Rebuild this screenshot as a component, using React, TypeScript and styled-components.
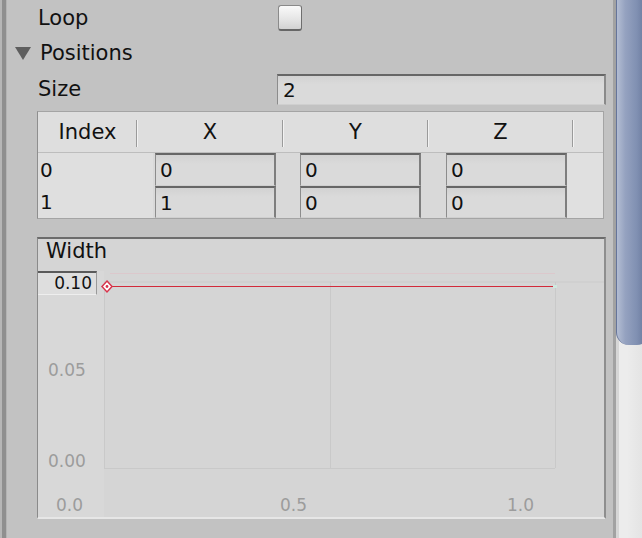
import React from 'react';
import styled, { createGlobalStyle } from 'styled-components';

const GlobalStyle = createGlobalStyle`
  html, body { margin: 0; padding: 0; background: #c2c2c2; overflow: hidden; }
  body { font-family: "DejaVu Sans", "Liberation Sans", sans-serif; color: #111; }
`;

const Page = styled.div`
  display: flex;
  width: 642px;
  height: 538px;
  overflow: hidden;
  background: #c2c2c2;
`;

const LeftEdge = styled.div`
  width: 8px;
  flex: none;
  background: linear-gradient(to right, #b6b6b6 0 2px, #8f8f8f 2px 6px, #b3b3b3 6px 7px, #c2c2c2 7px);
`;

const Main = styled.div`
  flex: 1;
  display: flex;
  flex-direction: column;
  padding: 0 7px 0 29px;
  min-width: 0;
`;

const Scrollbar = styled.div`
  width: 29px;
  flex: none;
  position: relative;
  overflow: hidden;
  background: linear-gradient(to right, #a2a2a2 0 3px, #d6d6d6 3px 6px, #ececec 6px 14px, #e4e4e4);
`;

const Thumb = styled.div`
  position: absolute;
  left: 3px;
  right: -8px;
  top: -20px;
  height: 365px;
  border-radius: 0 0 13px 13px;
  border-left: 1px solid #66759a;
  background: linear-gradient(to right, #b3bdd3, #95a2c0 25%, #8090b2 60%, #5f6e92);
`;

const PropRow = styled.div<{ $h: number }>`
  display: grid;
  grid-template-columns: 240px 1fr;
  align-items: center;
  height: ${p => p.$h}px;
`;

const Label = styled.div`
  font-size: 21px;
  line-height: 24px;
  padding-left: 1px;
  white-space: nowrap;
`;

const SizeLabel = styled(Label)`
  margin-top: 7px;
`;

const Checkbox = styled.div`
  width: 22px;
  height: 23px;
  margin-left: 1px;
  border-radius: 3px;
  border: 1px solid #8a8a8a;
  border-right-color: #6e6e6e;
  border-bottom: 2px solid #666;
  background: linear-gradient(to bottom, #fafafa, #e4e4e4 60%, #d2d2d2);
`;

const FoldoutRow = styled.div`
  display: flex;
  align-items: center;
  height: 35px;
  gap: 8px;
`;

const Triangle = styled.div`
  margin-left: -22px;
  width: 0;
  height: 0;
  border-left: 8px solid transparent;
  border-right: 8px solid transparent;
  border-top: 13px solid #5e5e5e;
  margin-top: 2px;
`;

const Field = styled.div<{ $pad?: number }>`
  box-sizing: border-box;
  height: 100%;
  font-size: 20px;
  line-height: 24px;
  display: flex;
  align-items: center;
  padding-left: ${p => p.$pad ?? 4}px;
  background: linear-gradient(to bottom, #d2d2d2, #dadada 30%, #dadada);
  border-top: 2px solid #666;
  border-left: 1px solid #8c8c8c;
  border-right: 2px solid #7e7e7e;
  border-bottom: 1px solid #cfcfcf;
`;

const SizeField = styled(Field)`
  height: 31px;
  margin-top: 4px;
  border-right: 2px solid #8a8a8a;
`;

const Table = styled.div`
  margin-top: 3px;
  width: 567px;
  box-sizing: border-box;
  border: 1px solid #a4a4a4;
  border-left-color: #8e8e8e;
  background: #dcdcdc;
`;

const HeaderRow = styled.div`
  display: grid;
  grid-template-columns: 99px 146px 145px 145px 1fr;
  height: 40px;
  background: #dedede;
  border-bottom: 1px solid #bdbdbd;
`;

const HeaderCell = styled.div<{ $divider?: boolean }>`
  position: relative;
  text-align: center;
  font-size: 21px;
  line-height: 24px;
  padding-top: 8px;
  &::after {
    content: '';
    display: ${p => (p.$divider ? 'block' : 'none')};
    position: absolute;
    right: 0;
    top: 8px;
    height: 27px;
    width: 1px;
    background: #9a9a9a;
    box-shadow: 1px 0 0 #f2f2f2;
  }
`;

const BodyRow = styled.div<{ $h: number }>`
  display: grid;
  grid-template-columns: 115px 145px 146px 123px 1fr;
  height: ${p => p.$h}px;
`;

const IndexCell = styled.div`
  font-size: 20px;
  line-height: 24px;
  padding-left: 2px;
  display: flex;
  align-items: center;
  background: #dfdfdf;
`;

const ValueCell = styled.div`
  padding-left: 2px;
  background: #d9d9d9;
  & > div { width: 121px; }
`;

const FillerCell = styled.div`
  background: #e0e0e0;
`;

const CurvePanel = styled.div`
  margin-top: 18px;
  width: 569px;
  height: 282px;
  box-sizing: border-box;
  border-top: 2px solid #6c6c6c;
  border-left: 1px solid #8a8a8a;
  border-right: 2px solid #8e8e8e;
  border-bottom: 2px solid #e6e6e6;
  background: #d5d5d5;
  display: flex;
  flex-direction: column;
`;

const CurveTitle = styled.div`
  font-size: 21px;
  line-height: 24px;
  padding-left: 8px;
  height: 24px;
`;

const Graph = styled.div`
  position: relative;
  flex: 1;
`;

const GraphSvg = styled.svg`
  position: absolute;
  left: 0;
  top: -24px;
  width: 566px;
  height: 278px;
  overflow: visible;
`;

const ValueBox = styled.div`
  position: absolute;
  left: 0;
  top: 8px;
  width: 59px;
  height: 24px;
  box-sizing: border-box;
  border-top: 2px solid #5a5a5a;
  border-right: 1px solid #9a9a9a;
  border-bottom: 1px solid #eeeeee;
  background: #dedede;
  font-size: 17px;
  line-height: 20px;
  text-align: right;
  padding-right: 4px;
`;

const axisText = { fontFamily: '"DejaVu Sans", sans-serif', fontSize: 17, fill: '#9c9c9c' } as const;

const rows = [
  { i: '0', x: '0', y: '0', z: '0', h: 33 },
  { i: '1', x: '1', y: '0', z: '0', h: 32 },
];

export default function App() {
  return (
    <>
      <GlobalStyle />
      <Page>
        <LeftEdge />
        <Main>
          <PropRow $h={35}>
            <Label>Loop</Label>
            <Checkbox />
          </PropRow>
          <FoldoutRow>
            <Triangle />
            <Label>Positions</Label>
          </FoldoutRow>
          <PropRow $h={38} style={{ alignItems: 'start' }}>
            <SizeLabel>Size</SizeLabel>
            <SizeField $pad={5}>2</SizeField>
          </PropRow>
          <Table>
            <HeaderRow>
              <HeaderCell $divider>Index</HeaderCell>
              <HeaderCell $divider>X</HeaderCell>
              <HeaderCell $divider>Y</HeaderCell>
              <HeaderCell $divider>Z</HeaderCell>
              <HeaderCell />
            </HeaderRow>
            {rows.map(r => (
              <BodyRow key={r.i} $h={r.h}>
                <IndexCell>{r.i}</IndexCell>
                <ValueCell><Field>{r.x}</Field></ValueCell>
                <ValueCell><Field>{r.y}</Field></ValueCell>
                <ValueCell><Field>{r.z}</Field></ValueCell>
                <FillerCell />
              </BodyRow>
            ))}
          </Table>
          <CurvePanel>
            <CurveTitle>Width</CurveTitle>
            <Graph>
              <GraphSvg viewBox="0 0 566 278">
                <rect x="0" y="32" width="66" height="246" fill="#d8d8d8" />
                <line x1="66" y1="43" x2="566" y2="43" stroke="#cbcbcb" strokeWidth="1" />
                <line x1="66.5" y1="43" x2="66.5" y2="229" stroke="#c9c9c9" strokeWidth="1" />
                <line x1="66" y1="229.5" x2="517" y2="229.5" stroke="#c9c9c9" strokeWidth="1" />
                <line x1="292.5" y1="43" x2="292.5" y2="229" stroke="#c9c9c9" strokeWidth="1" />
                <line x1="517.5" y1="43" x2="517.5" y2="229" stroke="#c9c9c9" strokeWidth="1" />
                <line x1="72" y1="34.5" x2="517" y2="34.5" stroke="#dcc8cc" strokeWidth="1" />
                <line x1="72" y1="47.5" x2="517" y2="47.5" stroke="#d22a3a" strokeWidth="1.2" />
                <rect x="515" y="46" width="4" height="3" fill="#cfe8df" />
                <polygon points="69,42 74,47.5 69,53 64,47.5" fill="#fff" stroke="#d8344c" strokeWidth="1.5" />
                <circle cx="69" cy="47.5" r="1.4" fill="#d8344c" />
                <text x="10" y="137" style={axisText}>0.05</text>
                <text x="10" y="228" style={axisText}>0.00</text>
                <text x="18" y="272" style={axisText}>0.0</text>
                <text x="242" y="272" style={axisText}>0.5</text>
                <text x="469" y="272" style={axisText}>1.0</text>
              </GraphSvg>
              <ValueBox>0.10</ValueBox>
            </Graph>
          </CurvePanel>
        </Main>
        <Scrollbar>
          <Thumb />
        </Scrollbar>
      </Page>
    </>
  );
}
